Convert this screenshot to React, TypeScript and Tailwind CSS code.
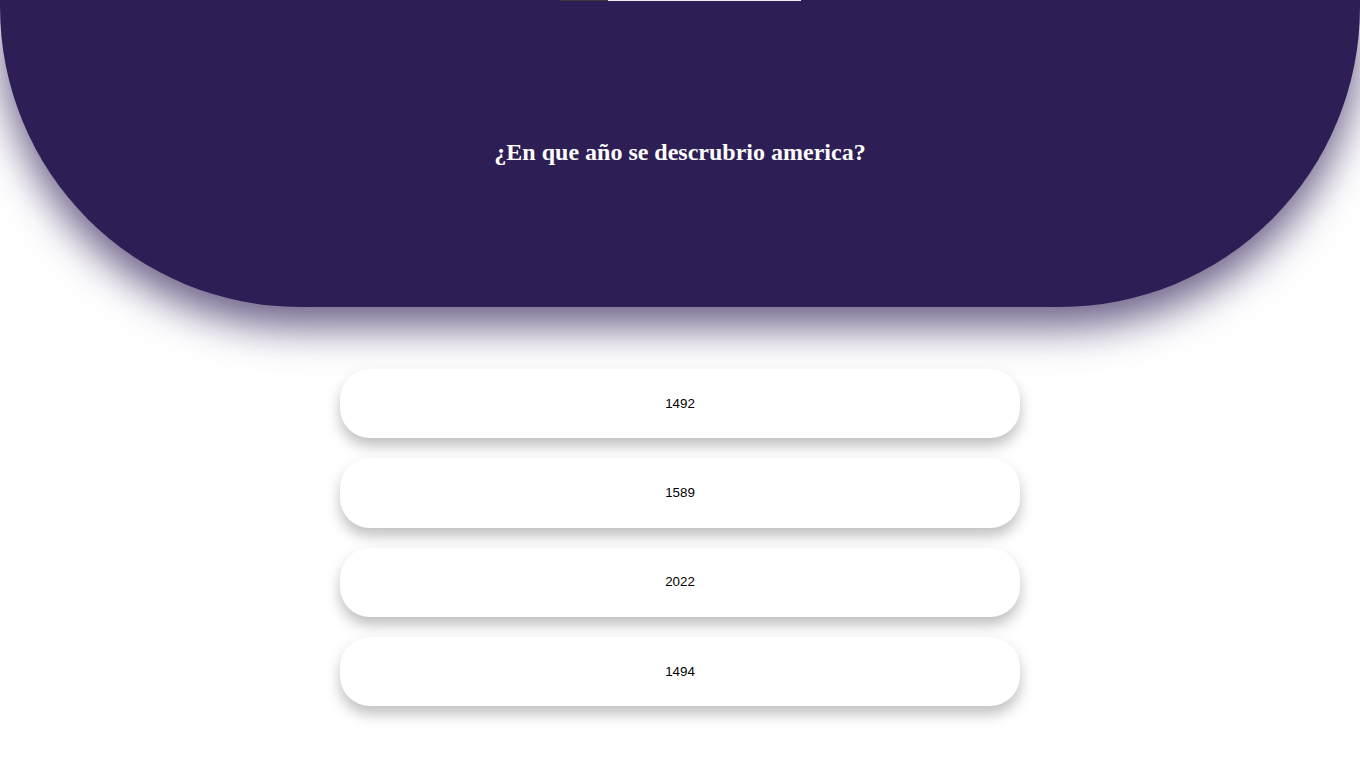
import React from 'react';

export default function App() {
  const answers = ['1492', '1589', '2022', '1494'];

  return (
    <div className="min-h-screen bg-white">
      <header className="flex h-[307px] flex-col items-center rounded-b-[300px] bg-[#2d1e55] shadow-[0_20px_40px_rgba(45,29,85,0.7)]">
        <div className="flex h-px w-[241px] bg-[#efefef]">
          <div className="w-[48px] bg-[#3b3b3b]" />
        </div>
        <div className="flex flex-1 items-center justify-center pb-[4px]">
          <h2 className="font-['Liberation_Serif','Times_New_Roman',serif] text-[24px] font-bold text-white">
            ¿En que año se descrubrio america?
          </h2>
        </div>
      </header>

      <main className="mx-auto mt-[62px] flex w-[680px] flex-col gap-[20px]">
        {answers.map((a) => (
          <button
            key={a}
            className="h-[69.33px] rounded-[30px] bg-white font-['Liberation_Sans',Arial,sans-serif] text-[13.33px] text-black shadow-[0_8px_14px_rgba(0,0,0,0.25)]"
          >
            {a}
          </button>
        ))}
      </main>
    </div>
  );
}
